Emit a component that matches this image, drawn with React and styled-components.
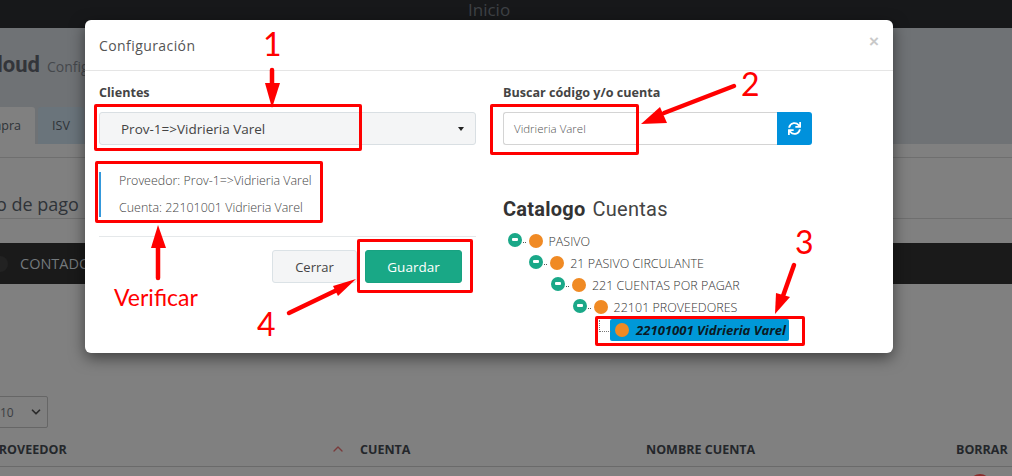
import React from "react";
import styled, { createGlobalStyle } from "styled-components";
import { FaSync } from "react-icons/fa";
import { ChevronUp, ChevronDown } from "lucide-react";

const Global = createGlobalStyle`
  html, body { margin: 0; padding: 0; background: #808080; }
  body { font-family: "Open Sans", "Noto Sans", sans-serif; }
  * { box-sizing: border-box; }
`;

const Page = styled.div`
  position: relative;
  width: 1012px;
  height: 476px;
  overflow: hidden;
  background: #808080;
`;

const TopBar = styled.div`
  height: 28px;
  background: #17181a;
  color: #3f4246;
  font-size: 17px;
  line-height: 20px;
  padding-left: 468px;
`;

const HeaderBand = styled.div`
  height: 116px;
  background: #6f7275;
  display: flex;
  flex-direction: column;
  justify-content: space-between;
`;

const TitleRow = styled.div`
  display: flex;
  align-items: baseline;
  gap: 7px;
  margin-top: 23px;
  color: #33353a;
`;

const Brand = styled.span`
  font-family: "Roboto", sans-serif;
  font-size: 22px;
  font-weight: 700;
  line-height: 28px;
  margin-left: -3px;
`;

const BrandSub = styled.span`
  font-size: 14px;
  color: #45484c;
`;

const Tabs = styled.div`
  display: flex;
  gap: 3px;
  height: 37px;
  margin-left: -20px;
`;

const Tab = styled.div`
  width: ${(p) => p.$w}px;
  display: flex;
  align-items: center;
  justify-content: ${(p) => (p.$active ? "flex-end" : "center")};
  padding-right: ${(p) => (p.$active ? "14px" : "0")};
  background: ${(p) => (p.$active ? "#808080" : "#6a747b")};
  border-radius: 3px 3px 0 0;
  color: #2e3338;
  font-size: 12.5px;
`;

const SectionLine = styled.div`
  height: 1px;
  background: #6f6f6f;
  margin-top: ${(p) => p.$top}px;
`;

const SectionTitle = styled.div`
  margin: 32px 0 0 -4px;
  font-size: 18px;
  line-height: 28px;
  color: #2f3338;
  height: 28px;
  white-space: nowrap;
`;

const DarkBar = styled.div`
  margin-top: 24px;
  height: 41px;
  background: #1a1a1a;
  display: flex;
  align-items: center;
  gap: 12px;
  color: #74797d;
  font-size: 14.5px;
  padding-left: 0;
`;

const DarkDot = styled.span`
  width: 16px;
  height: 16px;
  margin-left: -8px;
  border-radius: 50%;
  background: #222;
`;

const PageSize = styled.div`
  margin: 112px 0 0 -12px;
  width: 60px;
  height: 32px;
  border: 1px solid #666;
  border-radius: 2px;
  display: flex;
  align-items: center;
  justify-content: space-between;
  padding: 0 4px 0 11px;
  font-size: 12px;
  color: #3b3e42;
`;

const TableHead = styled.div`
  display: flex;
  align-items: center;
  height: 39px;
  border-bottom: 1px solid #6a6a6a;
  font-size: 12.5px;
  font-weight: 700;
  color: #24272b;
  margin-top: 0;
  padding-top: 4px;
`;

const HeadCell = styled.div`
  width: ${(p) => p.$w}px;
  margin-left: ${(p) => p.$ml || 0}px;
  flex: none;
  display: flex;
  align-items: center;
  justify-content: space-between;
  white-space: nowrap;
  padding-right: ${(p) => p.$pr || 0}px;
`;

const DeleteDot = styled.div`
  width: 22px;
  height: 22px;
  margin: 7px 0 0 969px;
  border-radius: 50%;
  background: #8a2b2b;
`;

const Modal = styled.div`
  position: absolute;
  left: 85px;
  top: 20px;
  width: 808px;
  height: 333px;
  background: #fff;
  border-radius: 6px;
  box-shadow: 0 5px 15px rgba(0, 0, 0, 0.5);
  color: #333;
`;

const ModalHeader = styled.div`
  height: 51px;
  border-bottom: 1px solid #e5e5e5;
  display: flex;
  align-items: center;
  justify-content: space-between;
  padding: 0 14px;
`;

const ModalTitle = styled.div`
  font-size: 14px;
  color: #555;
  letter-spacing: 0.42px;
`;

const Close = styled.span`
  font-family: "Liberation Sans", sans-serif;
  font-size: 17px;
  font-weight: 700;
  color: #c9c9c9;
  margin-top: -7px;
`;

const ModalBody = styled.div`
  display: grid;
  grid-template-columns: 377px 309px;
  column-gap: 27px;
  padding: 14px 14px 0;
`;

const Column = styled.div`
  display: flex;
  flex-direction: column;
`;

const Label = styled.label`
  font-size: 12.6px;
  font-weight: 700;
  line-height: 15px;
  color: #444;
  height: 27px;
`;

const SelectBox = styled.div`
  height: 33px;
  background: #f4f5f6;
  border: 1px solid #d9dfe3;
  border-radius: 3px;
  display: flex;
  align-items: center;
  justify-content: space-between;
  padding: 0 11px 0 21px;
  font-size: 13.5px;
  color: #444;
`;

const Caret = styled.span`
  border-top: 4px solid #222;
  border-left: 3.5px solid transparent;
  border-right: 3.5px solid transparent;
`;

const InfoBox = styled.div`
  margin-top: 27px;
  height: 45px;
  border-left: 2px solid #3498db;
  padding-left: 18px;
  display: flex;
  flex-direction: column;
  justify-content: space-between;
  font-size: 12.45px;
  font-weight: 300;
  line-height: 18px;
  color: #444;
`;

const Divider = styled.div`
  height: 1px;
  background: #e5e8ea;
  margin-top: 19px;
`;

const Footer = styled.div`
  display: flex;
  justify-content: flex-end;
  gap: 8px;
  margin-top: 13px;
  padding-right: 14px;
`;

const Button = styled.button`
  height: 33px;
  width: ${(p) => p.$w}px;
  padding: 0;
  border-radius: 3px;
  font-family: inherit;
  font-size: ${(p) => (p.$primary ? 13.5 : 13)}px;
  font-weight: ${(p) => (p.$primary ? 500 : 400)};
  border: 1px solid ${(p) => (p.$primary ? "#18a281" : "#dbe2e6")};
  background: ${(p) => (p.$primary ? "#19a886" : "#f4f5f6")};
  color: ${(p) => (p.$primary ? "#fff" : "#444")};
`;

const InputGroup = styled.div`
  display: flex;
  height: 33px;
`;

const SearchInput = styled.div`
  flex: 1;
  border: 1px solid #d4d4d4;
  border-right: none;
  border-radius: 3px 0 0 3px;
  display: flex;
  align-items: center;
  padding-left: 10px;
  font-size: 11.5px;
  font-weight: 300;
  color: #555;
`;

const RefreshButton = styled.div`
  width: 35px;
  background: #0091dc;
  border-radius: 0 3px 3px 0;
  color: #fff;
  font-size: 13px;
  display: flex;
  align-items: center;
  justify-content: center;
`;

const CatalogTitle = styled.h3`
  margin: 50px 0 0;
  font-size: 20px;
  line-height: 28px;
  font-weight: 400;
  color: #444;
  font-family: "Roboto", sans-serif;
  letter-spacing: 0.25px;
`;

const Strong = styled.strong`
  font-weight: 700;
  margin-right: 7px;
  color: #333;
`;

const Tree = styled.div`
  margin-top: 7px;
  display: flex;
  flex-direction: column;
`;

const TreeRow = styled.div`
  height: 22px;
  display: flex;
  align-items: center;
  padding-left: ${(p) => 4.5 + p.$level * 21.7}px;
  font-size: 12.5px;
  font-weight: 300;
  color: #333;
  white-space: nowrap;
`;

const Toggle = styled.span`
  position: relative;
  width: 14px;
  height: 14px;
  margin-top: -2px;
  border-radius: 50%;
  background: #1aa888;
  display: flex;
  align-items: center;
  justify-content: center;
  flex: none;
  &::before {
    content: "";
    width: 6px;
    height: 3px;
    margin-top: -1px;
    background: #fff;
    border-radius: 1px;
  }
  &::after {
    content: "";
    position: absolute;
    left: 15px;
    top: 9px;
    width: 3px;
    border-top: 1px dotted #555;
  }
`;

const Dot = styled.span`
  width: 14px;
  height: 14px;
  border-radius: 50%;
  background: #f08a24;
  flex: none;
  margin: ${(p) => p.$m || "0 6px 0 7px"};
`;

const LeafRow = styled.div`
  position: relative;
  height: 22px;
  margin: 1px 0 0 107px;
  width: 179px;
  background: #0098d8;
  border-radius: 2px;
  display: flex;
  align-items: center;
  font-size: 13.1px;
  font-weight: 700;
  font-style: italic;
  color: #0b1a24;
  white-space: nowrap;
  &::before {
    content: "";
    position: absolute;
    left: -11px;
    top: 1px;
    width: 11px;
    height: 11px;
    border-left: 1px dotted #777;
    border-bottom: 1px dotted #777;
  }
`;

const AnnotBox = styled.div`
  position: absolute;
  left: ${(p) => p.$x}px;
  top: ${(p) => p.$y}px;
  width: ${(p) => p.$w}px;
  height: ${(p) => p.$h}px;
  border: 3px solid #ff0000;
  border-radius: 2px;
`;

const AnnotText = styled.div`
  position: absolute;
  left: ${(p) => p.$x}px;
  top: ${(p) => p.$y}px;
  font-family: "Lato", sans-serif;
  font-size: ${(p) => p.$size}px;
  line-height: 1;
  color: #ff0000;
  white-space: nowrap;
`;

const ArrowLayer = styled.svg`
  position: absolute;
  left: 0;
  top: 0;
  pointer-events: none;
`;

const Arrow = ({ x1, y1, x2, y2, head }) => (
  <g>
    <line x1={x1} y1={y1} x2={x2} y2={y2} stroke="#ff0000" strokeWidth="4.5" strokeLinecap="round" />
    <polygon points={head} fill="#ff0000" />
  </g>
);

export default function App() {
  return (
    <Page>
      <Global />
      <TopBar>Inicio</TopBar>
      <HeaderBand>
        <TitleRow>
          <Brand>loud</Brand>
          <BrandSub>Configuración</BrandSub>
        </TitleRow>
        <Tabs>
          <Tab $active $w={55}>Compra</Tab>
          <Tab $w={46}>ISV</Tab>
        </Tabs>
      </HeaderBand>
      <SectionLine $top={13} />
      <SectionTitle>o de pago</SectionTitle>
      <SectionLine $top={0} />
      <DarkBar>
        <DarkDot />
        <span>CONTADO</span>
      </DarkBar>
      <PageSize>
        <span>10</span>
        <ChevronDown size={14} strokeWidth={3} color="#2a2a2a" />
      </PageSize>
      <TableHead>
        <HeadCell $w={369} $ml={-9} $pr={14}>
          <span>PROVEEDOR</span>
          <ChevronUp size={16} strokeWidth={2} color="#7a3b3b" />
        </HeadCell>
        <HeadCell $w={286}>CUENTA</HeadCell>
        <HeadCell $w={310}>NOMBRE CUENTA</HeadCell>
        <HeadCell $w={56}>BORRAR</HeadCell>
      </TableHead>
      <DeleteDot />

      <Modal>
        <ModalHeader>
          <ModalTitle>Configuración</ModalTitle>
          <Close>×</Close>
        </ModalHeader>
        <ModalBody>
          <Column>
            <Label>Clientes</Label>
            <SelectBox>
              <span>Prov-1=&gt;Vidrieria Varel</span>
              <Caret />
            </SelectBox>
            <InfoBox>
              <span>Proveedor: Prov-1=&gt;Vidrieria Varel</span>
              <span>Cuenta: 22101001 Vidrieria Varel</span>
            </InfoBox>
            <Divider />
            <Footer>
              <Button $w={85}>Cerrar</Button>
              <Button $primary $w={97}>Guardar</Button>
            </Footer>
          </Column>
          <Column>
            <Label>Buscar código y/o cuenta</Label>
            <InputGroup>
              <SearchInput>Vidrieria Varel</SearchInput>
              <RefreshButton><FaSync /></RefreshButton>
            </InputGroup>
            <CatalogTitle><Strong>Catalogo</Strong>Cuentas</CatalogTitle>
            <Tree>
              <TreeRow $level={0}><Toggle /><Dot />PASIVO</TreeRow>
              <TreeRow $level={1}><Toggle /><Dot />21 PASIVO CIRCULANTE</TreeRow>
              <TreeRow $level={2}><Toggle /><Dot />221 CUENTAS POR PAGAR</TreeRow>
              <TreeRow $level={3}><Toggle /><Dot />22101 PROVEEDORES</TreeRow>
              <LeafRow><Dot $m="0 7px 0 5px" />22101001 Vidrieria Varel</LeafRow>
            </Tree>
          </Column>
        </ModalBody>
      </Modal>

      <AnnotBox $x={94} $y={104} $w={268} $h={47} />
      <AnnotBox $x={95} $y={161} $w={228} $h={62} />
      <AnnotBox $x={490} $y={104} $w={149} $h={51} />
      <AnnotBox $x={595} $y={316} $w={210} $h={30} />
      <AnnotBox $x={357} $y={239} $w={116} $h={54} />
      <ArrowLayer width="1012" height="476">
        <Arrow x1={272} y1={70} x2={272} y2={88} head="265,83 280,83 272,108" />
        <Arrow x1={734} y1={86} x2={664} y2={113} head="660,107 667,123 641,124" />
        <Arrow x1={794} y1={265} x2={783} y2={296} head="776,293 790,297 775,314" />
        <Arrow x1={289} y1={313} x2={337} y2={290} head="333,286 338,296 356,279" />
        <Arrow x1={158} y1={278} x2={158} y2={244} head="151,248 166,248 158,225" />
      </ArrowLayer>
      <AnnotText $x={263} $y={28} $size={32}>1</AnnotText>
      <AnnotText $x={741} $y={68} $size={32}>2</AnnotText>
      <AnnotText $x={795} $y={226} $size={32}>3</AnnotText>
      <AnnotText $x={257} $y={308} $size={32}>4</AnnotText>
      <AnnotText $x={114} $y={286} $size={23}>Verificar</AnnotText>
    </Page>
  );
}
